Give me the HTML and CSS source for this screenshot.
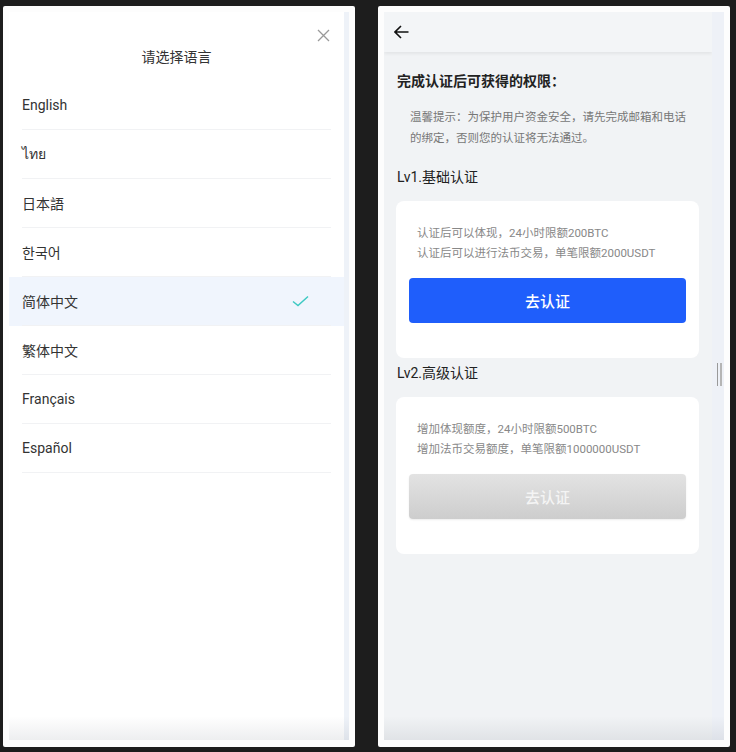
FILE: index.html
```html
<!DOCTYPE html>
<html lang="zh-CN">
<head>
    <meta charset="UTF-8">
    <title>语言与认证</title>
    <link rel="stylesheet" href="styles.css">
</head>
<body>
    <div class="panel">
        <div class="screen">
            <div class="sheet">
                <div class="sheet-header">
                    <h2>请选择语言</h2>
                    <span class="close">
                        <svg width="13" height="13" viewBox="0 0 13 13"><path d="M1 1L12 12M12 1L1 12" stroke="#9a9a9a" stroke-width="1.3" fill="none"/></svg>
                    </span>
                </div>
                <ul class="lang-list">
                    <li><span class="lang-name">English</span></li>
                    <li><span class="lang-name">ไทย</span></li>
                    <li><span class="lang-name">日本語</span></li>
                    <li><span class="lang-name">한국어</span></li>
                    <li class="active">
                        <span class="lang-name">简体中文
                            <svg class="check" width="17" height="12" viewBox="0 0 17 12"><path d="M1 6.5L6 10.5L16 1.5" stroke="#3ec9c3" stroke-width="1.5" fill="none"/></svg>
                        </span>
                    </li>
                    <li><span class="lang-name">繁体中文</span></li>
                    <li><span class="lang-name">Français</span></li>
                    <li><span class="lang-name">Español</span></li>
                </ul>
            </div>
            <div class="track"></div>
        </div>
    </div>

    <div class="panel">
        <div class="screen grey">
            <div class="page">
                <div class="topbar">
                    <svg width="15" height="14" viewBox="0 0 15 14"><path d="M14.5 7H1.2M7 1L1 7L7 13" stroke="#111" stroke-width="1.6" fill="none"/></svg>
                </div>
                <h3 class="page-title">完成认证后可获得的权限：</h3>
                <p class="tip">温馨提示：为保护用户资金安全，请先完成邮箱和电话的绑定，否则您的认证将无法通过。</p>

                <div class="level-title">Lv1.基础认证</div>
                <div class="card">
                    <p>认证后可以体现，24小时限额200BTC</p>
                    <p>认证后可以进行法币交易，单笔限额2000USDT</p>
                    <button class="btn">去认证</button>
                </div>

                <div class="level-title">Lv2.高级认证</div>
                <div class="card">
                    <p>增加体现额度，24小时限额500BTC</p>
                    <p>增加法币交易额度，单笔限额1000000USDT</p>
                    <button class="btn disabled">去认证</button>
                </div>
            </div>
            <div class="track wide">
                <div class="thumb"></div>
            </div>
        </div>
    </div>
</body>
</html>
```

FILE: styles.css
```css
* {
    box-sizing: border-box;
    margin: 0;
    padding: 0;
}

body {
    font-family: Roboto, "Noto Sans CJK SC", sans-serif;
    background-color: #1d1d1d;
    color: #333;
    display: flex;
    gap: 23px;
    padding: 6px 0 0 3px;
    height: 752px;
    overflow: hidden;
}

.panel {
    width: 352px;
    height: 741px;
    background: #fdfdfd;
    padding: 6px;
    border-radius: 2px;
}

.screen {
    height: 728px;
    display: flex;
    position: relative;
    overflow: hidden;
}

/* bottom fade of the device screen */
.screen::after {
    content: "";
    position: absolute;
    left: 0;
    right: 0;
    bottom: 0;
    height: 24px;
    background: linear-gradient(rgba(0, 0, 0, 0), rgba(30, 40, 60, 0.08));
}

.track {
    width: 5px;
    background-color: #eef2f8;
}

.track.wide {
    width: 12px;
    background-color: #eef1f7;
    padding-top: 351px;
}

.thumb {
    width: 5px;
    height: 23px;
    margin-left: 5px;
    border-left: 1px solid #999;
    border-right: 2px solid #b5b5b5;
}

/* language sheet */
.sheet {
    flex: 1;
    background: #fff;
}

.sheet-header {
    position: relative;
    padding: 35px 0 14px;
    text-align: center;
}

.sheet-header h2 {
    font-size: 14px;
    font-weight: 400;
    line-height: 20px;
    color: #333;
}

.close {
    position: absolute;
    top: 17px;
    right: 14px;
    line-height: 0;
}

.lang-list {
    list-style: none;
}

.lang-list li {
    padding: 0 13px;
}

.lang-name {
    display: flex;
    align-items: center;
    justify-content: space-between;
    height: 49px;
    border-bottom: 1px solid #f1f2f4;
    font-size: 14px;
    color: #333;
}

.lang-list li.active {
    background-color: #f0f5fd;
}

.check {
    margin-right: 22px;
}

/* verification page */
.page {
    flex: 1;
    background-color: #f1f3f5;
}

.topbar {
    height: 40px;
    background-color: #f3f5f7;
    box-shadow: 0 2px 3px rgba(0, 0, 0, 0.06);
    display: flex;
    align-items: center;
    padding-left: 10px;
}

.page-title {
    font-size: 14px;
    font-weight: 700;
    line-height: 20px;
    color: #222;
    margin: 19px 0 0 13px;
}

.tip {
    font-size: 11.5px;
    line-height: 21px;
    color: #777;
    padding: 0 22px 0 26px;
    margin-top: 16px;
}

.level-title {
    font-size: 14px;
    font-weight: 400;
    line-height: 20px;
    color: #222;
    margin: 18px 0 0 13px;
}

.card + .level-title {
    margin-top: 5px;
}

.card {
    background: #fff;
    border-radius: 8px;
    margin: 14px 13px 0 12px;
    padding: 22px 13px 35px;
}

.card p {
    font-size: 11.5px;
    line-height: 20px;
    color: #888;
    padding-left: 8px;
}

.btn {
    display: block;
    width: 100%;
    height: 45px;
    margin-top: 15px;
    border: none;
    border-radius: 4px;
    background-color: #1f5efb;
    color: #fff;
    font-family: Roboto, "Noto Sans CJK SC", sans-serif;
    font-size: 15px;
    font-weight: 500;
}

.btn.disabled {
    background: linear-gradient(#e3e3e3, #cdcdcd);
    color: #f4f4f4;
    box-shadow: 0 1px 2px rgba(0, 0, 0, 0.08);
}
```
